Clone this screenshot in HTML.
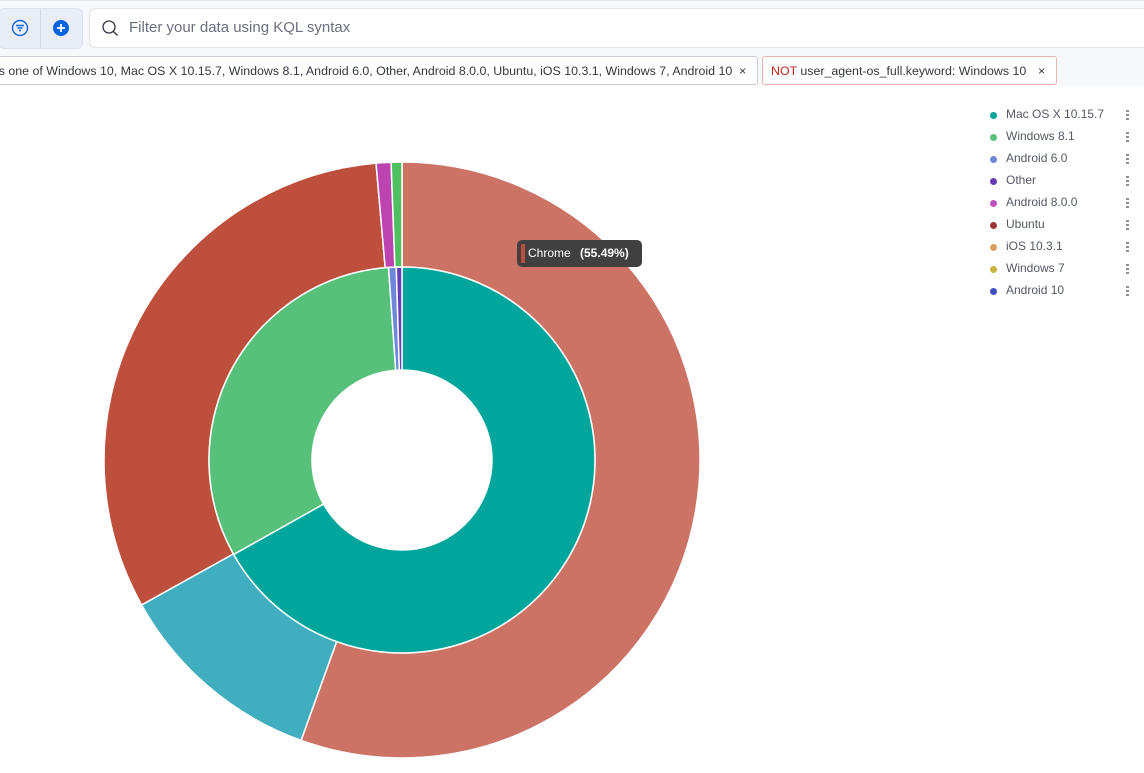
<!DOCTYPE html>
<html><head><meta charset="utf-8"><style>
body{margin:0;width:1144px;height:773px;overflow:hidden;background:#fff;font-family:"Liberation Sans",sans-serif;position:relative}
.top{position:absolute;left:0;top:0;width:1144px;height:55px;background:#f7f8fc;border-top:1px solid #e3e6ee}
.btns{position:absolute;left:-2px;top:7px;width:83px;height:39px;background:#e9edf5;border-radius:6px;border:1px solid #dde2ec}
.btns .sep{position:absolute;left:41px;top:0;width:1px;height:39px;background:#d3dae6}
.kql{position:absolute;left:89px;top:7px;width:1070px;height:38px;background:#fff;border:1px solid #dfe3ea;border-radius:6px;font-size:15px;color:#69707d}
.filters{position:absolute;left:0;top:55px;width:1144px;height:31px;background:#f7f8fc}
.pill{position:absolute;top:1px;height:29px;border:1px solid #c9cfdb;border-radius:3px;background:#fff;font-size:12.4px;color:#343741;line-height:29px;white-space:nowrap;box-sizing:border-box;overflow:hidden}
.legend{position:absolute;left:990px;top:107px;font-size:12px;color:#535966;width:150px}
.legend div{height:22px;position:relative;white-space:nowrap}
.legend i{position:absolute;left:0;top:5px;width:7px;height:7px;border-radius:50%}
.legend span{position:absolute;left:16px;top:0}
.legend b{position:absolute;left:136px;top:3px;width:3px;height:10px;background:repeating-linear-gradient(#8a8f99 0 2px,transparent 2px 4px)}
.tip{position:absolute;left:517px;top:240px;width:125px;height:27px;background:#404040;border-radius:5px;color:#fff;font-size:12px;line-height:27px;white-space:nowrap}
</style></head><body>
<div class="top">
<div class="btns"><div class="sep"></div>
<svg style="position:absolute;left:12px;top:10px" width="18" height="18" viewBox="0 0 18 18"><circle cx="9" cy="9" r="7.5" fill="none" stroke="#0b64dd" stroke-width="1.4"/><path d="M5 6.5h8M6.5 9h5M8 11.5h2" stroke="#0b64dd" stroke-width="1.4"/></svg>
<svg style="position:absolute;left:53px;top:10px" width="18" height="18" viewBox="0 0 18 18"><circle cx="9" cy="9" r="8" fill="#0b64dd"/><path d="M9 5v8M5 9h8" stroke="#fff" stroke-width="1.8"/></svg>
</div>
<div class="kql"><svg style="position:absolute;left:11px;top:10px" width="18" height="18" viewBox="0 0 18 18"><circle cx="8" cy="8" r="6" fill="none" stroke="#343741" stroke-width="1.3"/><path d="M12.5 12.5l4 4" stroke="#343741" stroke-width="1.3"/></svg><span style="position:absolute;left:39px;top:10px">Filter your data using KQL syntax</span></div>
</div>
<div class="filters">
<div class="pill" style="left:-8px;width:766px;padding-left:3px">is one of Windows 10, Mac OS X 10.15.7, Windows 8.1, Android 6.0, Other, Android 8.0.0, Ubuntu, iOS 10.3.1, Windows 7, Android 10 <span style="position:absolute;left:746px">×</span></div>
<div class="pill" style="left:762px;width:295px;padding-left:8px;border-color:#e8b5b0"><span style="color:#bd271e">NOT</span> user_agent-os_full.keyword: Windows 10 <span style="position:absolute;left:275px">×</span></div>
</div>
<svg id="c" style="position:absolute;left:0;top:0" width="1144" height="773"></svg>
<div class="legend">
<div><i style="background:#00a69b"></i><span>Mac OS X 10.15.7</span><b></b></div>
<div><i style="background:#57c17b"></i><span>Windows 8.1</span><b></b></div>
<div><i style="background:#6f87d8"></i><span>Android 6.0</span><b></b></div>
<div><i style="background:#663db8"></i><span>Other</span><b></b></div>
<div><i style="background:#bc52bc"></i><span>Android 8.0.0</span><b></b></div>
<div><i style="background:#9e3533"></i><span>Ubuntu</span><b></b></div>
<div><i style="background:#daa05d"></i><span>iOS 10.3.1</span><b></b></div>
<div><i style="background:#c9b23e"></i><span>Windows 7</span><b></b></div>
<div><i style="background:#3f4ec0"></i><span>Android 10</span><b></b></div>
</div>
<div class="tip"><span style="position:absolute;left:4px;top:4px;width:4px;height:19px;background:#be4f3d"></span><span style="position:absolute;left:11px">Chrome <b style="margin-left:6px">(55.49%)</b></span></div>
<script>
var cx=402,cy=460,s=document.getElementById('c'),h='';
function arc(a0,a1,r0,r1,c){var R=Math.PI/180;function p(a,r){return (cx+r*Math.sin(a*R)).toFixed(2)+','+(cy-r*Math.cos(a*R)).toFixed(2)}
var L=(a1-a0)>180?1:0;h+='<path d="M'+p(a0,r1)+'A'+r1+','+r1+' 0 '+L+' 1 '+p(a1,r1)+'L'+p(a1,r0)+'A'+r0+','+r0+' 0 '+L+' 0 '+p(a0,r0)+'Z" fill="'+c+'" stroke="#fff" stroke-width="1.5"/>';}
arc(0,199.8,193,298,'#cc7366');arc(199.8,240.9,193,298,'#41aec0');arc(240.9,355,193,298,'#be4f3d');arc(355,357.9,193,298,'#bc43b0');arc(357.9,360,193,298,'#4fc060');
arc(0,240.7,90,193,'#00a69b');arc(240.7,356,90,193,'#57c17b');arc(356,358.3,90,193,'#6f87d8');arc(358.3,360,90,193,'#663db8');
s.innerHTML=h;
</script>
</body></html>
